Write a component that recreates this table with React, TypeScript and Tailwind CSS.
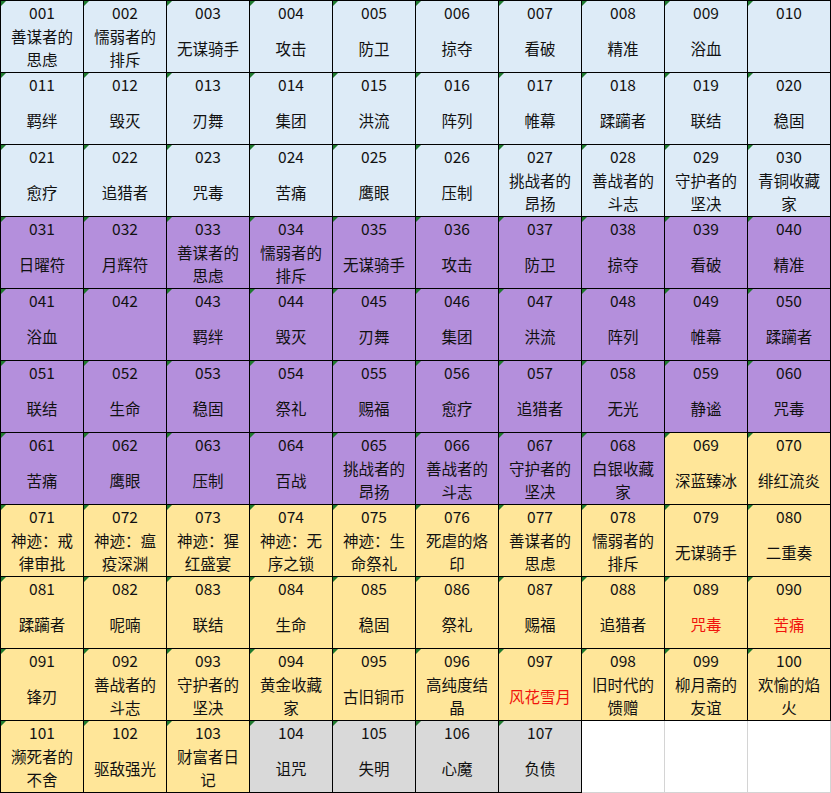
type Tone = 'blue' | 'purple' | 'yellow' | 'gray' | 'empty'

interface Cell {
  no: string
  name: string
  tone: Tone
  red?: boolean
}

const toneClass: Record<Tone, string> = {
  blue: 'bg-[#ddebf7] border-black',
  purple: 'bg-[#b48fdc] border-black',
  yellow: 'bg-[#ffe699] border-black',
  gray: 'bg-[#d9d9d9] border-black',
  empty: 'bg-white border-[#d4d4d4]',
}

const names = [
  // 001-030
  '善谋者的思虑', '懦弱者的排斥', '无谋骑手', '攻击', '防卫', '掠夺', '看破', '精准', '浴血', '',
  '羁绊', '毁灭', '刃舞', '集团', '洪流', '阵列', '帷幕', '蹂躏者', '联结', '稳固',
  '愈疗', '追猎者', '咒毒', '苦痛', '鹰眼', '压制', '挑战者的昂扬', '善战者的斗志', '守护者的坚决', '青铜收藏家',
  // 031-068
  '日曜符', '月辉符', '善谋者的思虑', '懦弱者的排斥', '无谋骑手', '攻击', '防卫', '掠夺', '看破', '精准',
  '浴血', '', '羁绊', '毁灭', '刃舞', '集团', '洪流', '阵列', '帷幕', '蹂躏者',
  '联结', '生命', '稳固', '祭礼', '赐福', '愈疗', '追猎者', '无光', '静谧', '咒毒',
  '苦痛', '鹰眼', '压制', '百战', '挑战者的昂扬', '善战者的斗志', '守护者的坚决', '白银收藏家',
  // 069-103
  '深蓝臻冰', '绯红流炎',
  '神迹：戒律审批', '神迹：瘟疫深渊', '神迹：猩红盛宴', '神迹：无序之锁', '神迹：生命祭礼', '死虐的烙印', '善谋者的思虑', '懦弱者的排斥', '无谋骑手', '二重奏',
  '蹂躏者', '呢喃', '联结', '生命', '稳固', '祭礼', '赐福', '追猎者', '咒毒', '苦痛',
  '锋刃', '善战者的斗志', '守护者的坚决', '黄金收藏家', '古旧铜币', '高纯度结晶', '风花雪月', '旧时代的馈赠', '柳月斋的友谊', '欢愉的焰火',
  '濒死者的不舍', '驱敌强光', '财富者日记',
  // 104-107
  '诅咒', '失明', '心魔', '负债',
]

const redSet = new Set([89, 90, 97])

function toneFor(n: number): Tone {
  if (n <= 30) return 'blue'
  if (n <= 68) return 'purple'
  if (n <= 103) return 'yellow'
  return 'gray'
}

const cells: Cell[] = [
  ...names.map((name, i) => ({
    no: String(i + 1).padStart(3, '0'),
    name,
    tone: toneFor(i + 1),
    red: redSet.has(i + 1),
  })),
  { no: '', name: '', tone: 'empty' as Tone },
  { no: '', name: '', tone: 'empty' as Tone },
  { no: '', name: '', tone: 'empty' as Tone },
]

function GridCell({ cell }: { cell: Cell }) {
  return (
    <div
      className={`relative flex h-[72px] w-[83px] flex-col items-center border-r border-b ${toneClass[cell.tone]}`}
    >
      {cell.no && (
        <>
          {/* excel "number stored as text" marker */}
          <div className="absolute left-0 top-0 h-0 w-0 border-t-[5px] border-r-[5px] border-t-[#1f7a2e] border-r-transparent" />
          <div className="h-[23px] leading-[23px]">{cell.no}</div>
          <div className="flex w-full flex-1 items-center justify-center">
            <div
              className={`w-[66px] text-center leading-[23px] ${cell.red ? 'text-[#f0140c]' : ''}`}
            >
              {cell.name}
            </div>
          </div>
        </>
      )}
    </div>
  )
}

export default function App() {
  return (
    <div
      className="w-[831px] bg-white text-[15.5px] text-[#111]"
      style={{ fontFamily: '"Noto Sans CJK SC", "Noto Sans", sans-serif' }}
    >
      <div className="grid grid-cols-[repeat(10,83px)] border-l border-t border-black">
        {cells.map((cell, i) => (
          <GridCell key={i} cell={cell} />
        ))}
      </div>
    </div>
  )
}
